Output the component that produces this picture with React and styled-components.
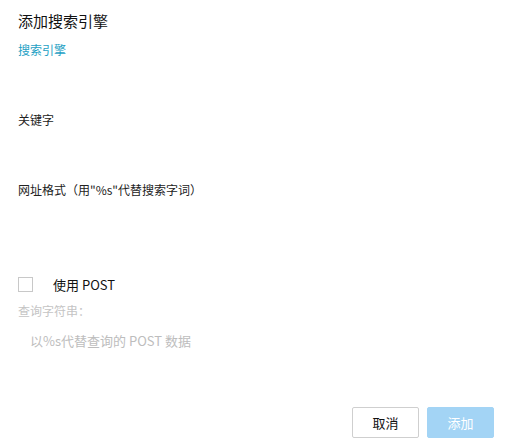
import React from 'react';
import styled, { createGlobalStyle } from 'styled-components';

const GlobalStyle = createGlobalStyle`
  html, body {
    margin: 0;
    padding: 0;
    background: #ffffff;
  }
  body {
    font-family: "Noto Sans CJK SC", "Noto Sans", sans-serif;
    color: #222;
  }
`;

const Dialog = styled.div`
  width: 506px;
  height: 447px;
  box-sizing: border-box;
  padding: 10px 12px 0 18px;
  display: flex;
  flex-direction: column;
`;

const Title = styled.div`
  font-size: 15px;
  line-height: 22px;
  color: #111;
`;

const Label = styled.div`
  font-size: 12px;
  line-height: 16px;
  color: ${({ active, muted }) => (active ? '#1e9fc4' : muted ? '#c4c4c4' : '#222')};
`;

const Field = styled.div`
  display: flex;
  flex-direction: column;
  margin-top: ${({ first }) => (first ? '10px' : '0')};
`;

const Input = styled.input`
  height: 54px;
  border: none;
  outline: none;
  padding: 0;
  background: transparent;
`;

const CheckRow = styled.label`
  display: flex;
  align-items: center;
  height: 24px;
  margin-top: 20px;
  margin-bottom: 7px;
  font-size: 13px;
  color: #111;
`;

const Box = styled.span`
  width: 13px;
  height: 13px;
  border: 1px solid #c8c8c8;
  margin-right: 20px;
`;

const Placeholder = styled.div`
  margin-top: 13px;
  padding-left: 12px;
  font-size: 13px;
  line-height: 18px;
  color: #bdbdbd;
`;

const Footer = styled.div`
  margin-top: auto;
  margin-bottom: 9px;
  display: flex;
  justify-content: flex-end;
  gap: 8px;
`;

const Button = styled.button`
  width: 67px;
  height: 31px;
  box-sizing: border-box;
  font-family: inherit;
  font-size: 13px;
  border-radius: 2px;
  border: 1px solid ${({ primary }) => (primary ? '#a3d4f5' : '#cfcfcf')};
  background: ${({ primary }) => (primary ? '#a3d4f5' : '#ffffff')};
  color: ${({ primary }) => (primary ? '#ffffff' : '#111')};
  padding: 0;
`;

export default function App() {
  return (
    <>
      <GlobalStyle />
      <Dialog>
        <Title>添加搜索引擎</Title>
        <Field first>
          <Label active>搜索引擎</Label>
          <Input />
        </Field>
        <Field>
          <Label>关键字</Label>
          <Input />
        </Field>
        <Field>
          <Label>网址格式（用"%s"代替搜索字词）</Label>
          <Input />
        </Field>
        <CheckRow>
          <Box />
          使用 POST
        </CheckRow>
        <Label muted>查询字符串：</Label>
        <Placeholder>以%s代替查询的 POST 数据</Placeholder>
        <Footer>
          <Button>取消</Button>
          <Button primary>添加</Button>
        </Footer>
      </Dialog>
    </>
  );
}
